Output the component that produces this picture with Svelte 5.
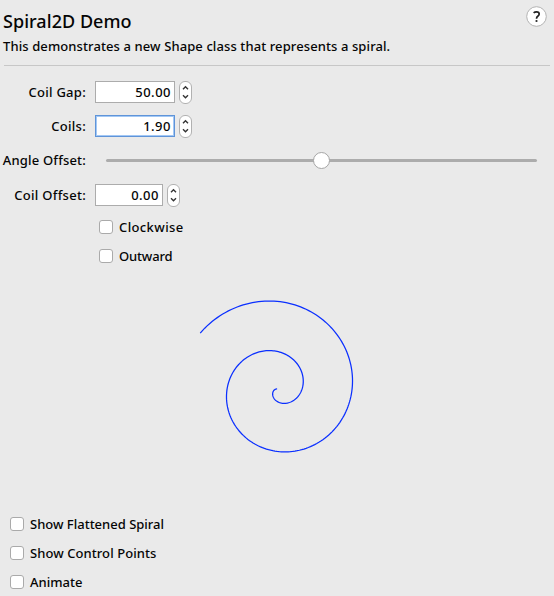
<script>
  const spinners = [
    { label: 'Coil Gap:', value: '50.00', width: 80 },
    { label: 'Coils:', value: '1.90', width: 80, focused: true }
  ];
  const coilGap = 50;
  const coils = 1.9;

  function spiralPath(cx, cy) {
    let d = '';
    for (let i = 0; i <= 342; i++) {
      const t = (i / 342) * coils;
      const a = Math.PI - t * 2 * Math.PI;
      const r = coilGap * t;
      d += `${i ? 'L' : 'M'}${(cx + r * Math.cos(a)).toFixed(2)} ${(cy + r * Math.sin(a)).toFixed(2)}`;
    }
    return d;
  }
</script>

{#snippet spinner(s)}
  <div class="row">
    <span class="label">{s.label}</span>
    <span class="field" class:focused={s.focused} style:width="{s.width}px">{s.value}</span>
    <svg class="stepper" width="13" height="23" viewBox="0 0 13 23">
      <rect x="0.5" y="0.5" width="12" height="22" rx="5.5" fill="#fff" stroke="#b1b1b1" />
      <path d="M4 8.2L6.5 5.7L9 8.2M4 14.3L6.5 16.8L9 14.3" fill="none" stroke="#333" stroke-width="1.4" />
    </svg>
  </div>
{/snippet}

{#snippet check(text, spacing = 0)}
  <div class="check"><span class="box"></span><span style:letter-spacing="{spacing}px">{text}</span></div>
{/snippet}

<main>
  <header>
    <div class="heading">
      <h1>Spiral2D Demo</h1>
      <p>This demonstrates a new Shape class that represents a spiral.</p>
    </div>
    <svg class="help" width="22" height="22" viewBox="0 0 22 22">
      <circle cx="10.5" cy="10.5" r="9.8" fill="#fff" stroke="#b3b3b3" />
      <path d="M7.6 6.9Q8.8 5.9 10.5 5.9Q13.2 5.9 13.2 8.1Q13.2 9.3 11.8 10.3Q10.5 11.2 10.5 12.7" fill="none" stroke="#222" stroke-width="1.7" />
      <rect x="9.6" y="14.1" width="1.8" height="1.8" fill="#222" />
    </svg>
  </header>

  <section class="controls">
    {#each spinners as s}{@render spinner(s)}{/each}
    <div class="row slider-row">
      <span class="label">Angle Offset:</span>
      <div class="track"><span class="thumb"></span></div>
    </div>
    {@render spinner({ label: 'Coil Offset:', value: '0.00', width: 68 })}
    <div class="toggles">
      {@render check('Clockwise', 0.38)}
      {@render check('Outward', -0.15)}
    </div>
  </section>

  <svg class="canvas" width="554" height="239" viewBox="0 271 554 239">
    <path d={spiralPath(277.1, 388.9)} fill="none" stroke="#0a2fff" stroke-width="1.25" />
  </svg>

  <section class="options">
    {@render check('Show Flattened Spiral')}
    {@render check('Show Control Points', 0.07)}
    {@render check('Animate')}
  </section>
</main>

<style>
  :global(body) { margin: 0; background: #eaeaea; }
  main {
    width: 554px; height: 596px; overflow: hidden; background: #eaeaea; color: #050505;
    font: 500 13px/20px "Noto Sans", "Open Sans", sans-serif;
    display: flex; flex-direction: column; white-space: nowrap;
  }
  header {
    box-sizing: border-box; flex: none; height: 66px; margin: 0 4px; padding-top: 6px;
    border-bottom: 1px solid #c7c7c7; display: flex; justify-content: space-between;
  }
  .heading { margin-left: -1px; }
  h1 { margin: 3px 0 0; font-size: 18px; font-weight: 500; line-height: 24px; letter-spacing: 0.05px; }
  p { margin: 3px 0 0; letter-spacing: 0.1px; }
  .help { margin-right: 2px; }
  .controls { flex: none; height: 205px; padding-top: 15px; box-sizing: border-box; }
  .row { display: flex; align-items: center; height: 22px; margin-bottom: 12px; }
  .label { width: 86px; text-align: right; margin-right: 9px; letter-spacing: 0.28px; }
  .slider-row .label { letter-spacing: 0.18px; }
  .field {
    box-sizing: border-box; height: 22px; padding-right: 3px; line-height: 20px;
    border: 1px solid #acacac; background: #fff; text-align: right; letter-spacing: 0.5px;
  }
  .focused { border-color: #5f94d8; box-shadow: inset 0 0 0 1px #a3c8f5; }
  .stepper { margin-left: 4px; }
  .slider-row { margin-bottom: 13px; }
  .track {
    width: 431px; height: 3px; margin-left: 11px; border-radius: 2px; background: #acacac;
    display: flex; align-items: center; justify-content: center;
  }
  .thumb {
    box-sizing: border-box; width: 17px; height: 17px; flex: none;
    border: 1px solid #a5a5a5; border-radius: 50%; background: #fff;
  }
  .check { display: flex; align-items: center; height: 20px; margin-bottom: 9px; gap: 6px; }
  .box {
    box-sizing: border-box; width: 14px; height: 14px;
    border: 1px solid #aaa; border-radius: 3px; background: #fff;
  }
  .toggles { margin: -1px 0 0 99px; }
  .canvas { display: block; flex: none; }
  .options { flex: none; padding: 4px 0 0 10px; }
</style>
